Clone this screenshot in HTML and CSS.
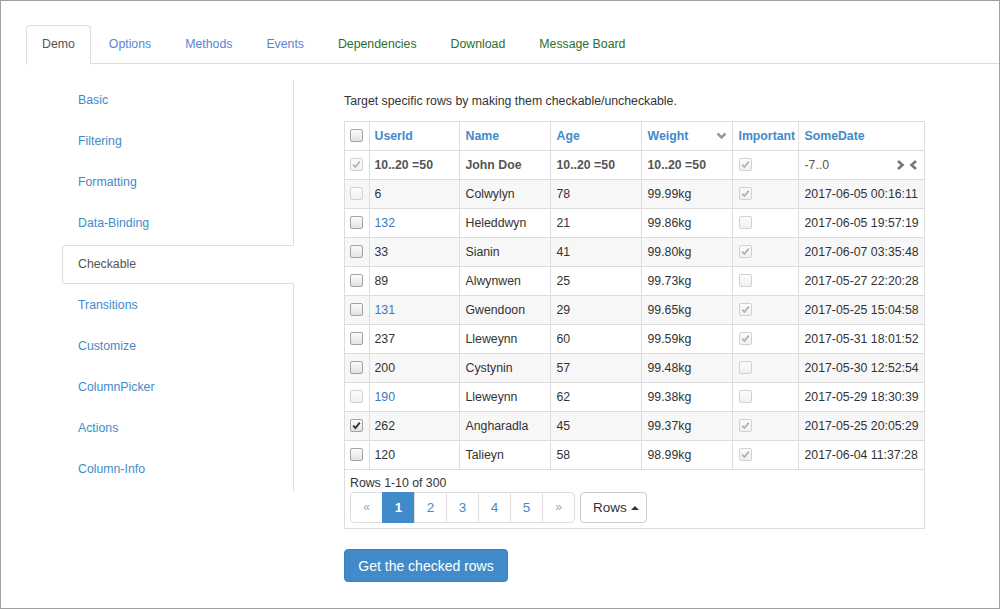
FILE: index.html
```html
<!DOCTYPE html>
<html>
<head>
<meta charset="utf-8">
<title>Checkable</title>
<link rel="stylesheet" href="styles.css">
</head>
<body>
<div class="page">
  <ul class="tabs">
    <li class="tab active"><a>Demo</a></li>
    <li class="tab"><a class="c-blue">Options</a></li>
    <li class="tab"><a class="c-blue">Methods</a></li>
    <li class="tab"><a class="c-blue">Events</a></li>
    <li class="tab"><a class="c-green">Dependencies</a></li>
    <li class="tab"><a class="c-green">Download</a></li>
    <li class="tab"><a class="c-green">Message Board</a></li>
  </ul>
  <div class="layout">
    <ul class="side">
      <li><a>Basic</a></li>
      <li><a>Filtering</a></li>
      <li><a>Formatting</a></li>
      <li><a>Data-Binding</a></li>
      <li class="active"><a>Checkable</a></li>
      <li><a>Transitions</a></li>
      <li><a>Customize</a></li>
      <li><a>ColumnPicker</a></li>
      <li><a>Actions</a></li>
      <li><a>Column-Info</a></li>
    </ul>
    <main class="main">
      <p class="intro">Target specific rows by making them checkable/uncheckable.</p>
      <div class="grid">
        <table>
          <colgroup>
            <col class="w-cb"><col class="w-uid"><col class="w-91"><col class="w-91"><col class="w-91"><col class="w-imp"><col class="w-date">
          </colgroup>
          <thead>
            <tr class="head">
              <th class="cbcell"><span class="cb"></span></th>
              <th class="first">UserId</th>
              <th>Name</th>
              <th>Age</th>
              <th><div class="flexcell"><span>Weight</span><svg class="chev-down" width="11" height="8" viewBox="0 0 11 8"><polyline points="1.5,1.5 5.5,5.5 9.5,1.5" fill="none" stroke="#999" stroke-width="2.6"/></svg></div></th>
              <th>Important</th>
              <th>SomeDate</th>
            </tr>
            <tr class="filter">
              <td class="cbcell"><span class="cb dis chk"><svg viewBox="0 0 13 13"><polyline points="3.2,6.6 5.4,9 9.8,3.6" fill="none" stroke-width="1.7"/></svg></span></td>
              <td class="first">10..20 =50</td>
              <td>John Doe</td>
              <td>10..20 =50</td>
              <td>10..20 =50</td>
              <td><span class="cb dis chk"><svg viewBox="0 0 13 13"><polyline points="3.2,6.6 5.4,9 9.8,3.6" fill="none" stroke-width="1.7"/></svg></span></td>
              <td class="normal"><div class="flexcell"><span>-7..0</span><span class="dicons"><svg width="9" height="10" viewBox="0 0 9 10"><polyline points="2,1 6.5,5 2,9" fill="none" stroke="#777" stroke-width="2.6"/></svg><svg width="9" height="10" viewBox="0 0 9 10"><polyline points="7,1 2.5,5 7,9" fill="none" stroke="#777" stroke-width="2.6"/></svg></span></div></td>
            </tr>
          </thead>
          <tbody>
            <tr><td class="cbcell"><span class="cb dis"></span></td><td class="first">6</td><td>Colwylyn</td><td>78</td><td>99.99kg</td><td><span class="cb dis chk"><svg viewBox="0 0 13 13"><polyline points="3.2,6.6 5.4,9 9.8,3.6" fill="none" stroke-width="1.7"/></svg></span></td><td>2017-06-05 00:16:11</td></tr>
            <tr><td class="cbcell"><span class="cb"></span></td><td class="first link">132</td><td>Heleddwyn</td><td>21</td><td>99.86kg</td><td><span class="cb dis"></span></td><td>2017-06-05 19:57:19</td></tr>
            <tr><td class="cbcell"><span class="cb"></span></td><td class="first">33</td><td>Sianin</td><td>41</td><td>99.80kg</td><td><span class="cb dis chk"><svg viewBox="0 0 13 13"><polyline points="3.2,6.6 5.4,9 9.8,3.6" fill="none" stroke-width="1.7"/></svg></span></td><td>2017-06-07 03:35:48</td></tr>
            <tr><td class="cbcell"><span class="cb"></span></td><td class="first">89</td><td>Alwynwen</td><td>25</td><td>99.73kg</td><td><span class="cb dis"></span></td><td>2017-05-27 22:20:28</td></tr>
            <tr><td class="cbcell"><span class="cb"></span></td><td class="first link">131</td><td>Gwendoon</td><td>29</td><td>99.65kg</td><td><span class="cb dis chk"><svg viewBox="0 0 13 13"><polyline points="3.2,6.6 5.4,9 9.8,3.6" fill="none" stroke-width="1.7"/></svg></span></td><td>2017-05-25 15:04:58</td></tr>
            <tr><td class="cbcell"><span class="cb"></span></td><td class="first">237</td><td>Lleweynn</td><td>60</td><td>99.59kg</td><td><span class="cb dis chk"><svg viewBox="0 0 13 13"><polyline points="3.2,6.6 5.4,9 9.8,3.6" fill="none" stroke-width="1.7"/></svg></span></td><td>2017-05-31 18:01:52</td></tr>
            <tr><td class="cbcell"><span class="cb"></span></td><td class="first">200</td><td>Cystynin</td><td>57</td><td>99.48kg</td><td><span class="cb dis"></span></td><td>2017-05-30 12:52:54</td></tr>
            <tr><td class="cbcell"><span class="cb dis"></span></td><td class="first link">190</td><td>Lleweynn</td><td>62</td><td>99.38kg</td><td><span class="cb dis"></span></td><td>2017-05-29 18:30:39</td></tr>
            <tr><td class="cbcell"><span class="cb chk"><svg viewBox="0 0 13 13"><polyline points="3.2,6.6 5.4,9 9.8,3.6" fill="none" stroke-width="1.9"/></svg></span></td><td class="first">262</td><td>Angharadla</td><td>45</td><td>99.37kg</td><td><span class="cb dis chk"><svg viewBox="0 0 13 13"><polyline points="3.2,6.6 5.4,9 9.8,3.6" fill="none" stroke-width="1.7"/></svg></span></td><td>2017-05-25 20:05:29</td></tr>
            <tr><td class="cbcell"><span class="cb"></span></td><td class="first">120</td><td>Talieyn</td><td>58</td><td>98.99kg</td><td><span class="cb dis chk"><svg viewBox="0 0 13 13"><polyline points="3.2,6.6 5.4,9 9.8,3.6" fill="none" stroke-width="1.7"/></svg></span></td><td>2017-06-04 11:37:28</td></tr>
          </tbody>
        </table>
        <div class="grid-footer">
          <div class="info">Rows 1-10 of 300</div>
          <div class="pager-row">
            <ul class="pagination">
              <li><a class="arrow">&laquo;</a></li>
              <li class="active"><a>1</a></li>
              <li><a>2</a></li>
              <li><a>3</a></li>
              <li><a>4</a></li>
              <li><a>5</a></li>
              <li><a class="arrow">&raquo;</a></li>
            </ul>
            <button class="rows-btn">Rows <span class="caret-up"></span></button>
          </div>
        </div>
      </div>
      <button class="btn-primary">Get the checked rows</button>
    </main>
  </div>
</div>
</body>
</html>
```

FILE: styles.css
```css
html, body {
  margin: 0;
  padding: 0;
  background: #fff;
}
body {
  font-family: "Liberation Sans", Arial, sans-serif;
  font-size: 12.3px;
  color: #333;
}
.page {
  width: 1000px;
  height: 609px;
  box-sizing: border-box;
  border: 1px solid #a0a0a0;
  padding: 24px 0 0 25px;
  overflow: hidden;
}

/* top tabs */
.tabs {
  list-style: none;
  margin: 0;
  padding: 0;
  display: flex;
  height: 38px;
  border-bottom: 1px solid #ddd;
}
.tab {
  margin-right: 2px;
  margin-bottom: -1px;
}
.tab a {
  display: block;
  height: 37px;
  line-height: 37px;
  padding: 0 15px;
  border: 1px solid transparent;
  border-bottom: 1px solid transparent;
  border-radius: 4px 4px 0 0;
}
.tab.active a {
  border-color: #ddd #ddd transparent;
  background: #fff;
  color: #555;
  height: 38px;
}
.c-blue { color: #5a84d6; }
.c-green { color: #2d6e2f; }

/* layout */
.layout {
  display: flex;
  margin: 16px 0 0 36px;
}
.side {
  list-style: none;
  margin: 0;
  padding: 1px 0 2px;
  width: 232px;
  box-sizing: border-box;
  border-right: 1px solid #ddd;
  align-self: flex-start;
}
.side li + li {
  margin-top: 2px;
}
.side a {
  display: block;
  height: 37px;
  line-height: 37px;
  padding: 0 15px;
  border: 1px solid transparent;
  border-radius: 4px 0 0 4px;
  margin-right: -1px;
  color: #428bca;
}
.side li.active a {
  border-color: #ddd transparent #ddd #ddd;
  background: #fff;
  color: #555;
}

.main {
  margin-left: 50px;
  width: 581px;
}
.intro {
  margin: 12px 0 11px;
  line-height: 18px;
}

/* grid */
.grid {
  width: 581px;
  box-sizing: border-box;
  border: 1px solid #ddd;
}
table {
  width: 100%;
  border-collapse: collapse;
  table-layout: fixed;
  border-style: hidden;
}
.w-cb { width: 24px; }
.w-uid { width: 90px; }
.w-91 { width: 91px; }
.w-imp { width: 66px; }
.w-date { width: 126px; }
th, td {
  border: 1px solid #ddd;
  padding: 0 5px 0 6px;
  height: 28px;
  text-align: left;
  vertical-align: middle;
  white-space: nowrap;
  overflow: hidden;
}
th.first, td.first {
  padding-left: 5px;
}
th {
  color: #428bca;
  font-weight: bold;
}
.filter td {
  font-weight: bold;
  color: #555;
}
.filter td.normal {
  font-weight: normal;
}
tbody tr:nth-child(odd) td {
  background: #f7f7f7;
}
td.link {
  color: #3a78bf;
}
.cbcell {
  text-align: center;
  padding: 0;
}
.flexcell {
  display: flex;
  align-items: center;
  justify-content: space-between;
}
.chev-down {
  display: block;
}
.dicons {
  display: flex;
  gap: 4px;
  margin-right: 1px;
}
.dicons svg {
  display: block;
}

/* checkboxes */
.cb {
  display: inline-block;
  width: 11px;
  height: 11px;
  border: 1px solid #a3a3a3;
  border-radius: 2px;
  background: linear-gradient(#fbfbfb, #e2e2e2);
  vertical-align: -2px;
  position: relative;
}
.cb.dis {
  border-color: #d2d2d2;
  background: linear-gradient(#fcfcfc, #f0f0f0);
}
.cb svg {
  position: absolute;
  left: -1px;
  top: -1px;
  width: 13px;
  height: 13px;
  stroke: #333;
}
.cb.dis svg {
  stroke: #b0b0b0;
}

/* footer */
.grid-footer {
  border-top: 1px solid #ddd;
  padding: 4px 5px 5px;
}
.info {
  line-height: 18px;
}
.pager-row {
  display: flex;
  align-items: flex-start;
}
.pagination {
  list-style: none;
  margin: 0;
  padding: 0;
  display: flex;
}
.pagination li a {
  display: block;
  width: 31px;
  height: 29px;
  line-height: 29px;
  text-align: center;
  border: 1px solid #ddd;
  margin-left: -1px;
  color: #428bca;
  font-size: 13.5px;
  background: #fff;
}
.pagination li:first-child a {
  margin-left: 0;
  border-radius: 4px 0 0 4px;
}
.pagination li:last-child a {
  border-radius: 0 4px 4px 0;
}
.pagination li.active a {
  background: #428bca;
  border-color: #428bca;
  color: #fff;
  font-weight: bold;
}
.pagination a.arrow {
  color: #97a9c9;
  font-size: 12px;
}
.rows-btn {
  margin-left: 5px;
  width: 67px;
  height: 31px;
  padding: 0 0 0 12px;
  text-align: left;
  border: 1px solid #ccc;
  border-radius: 4px;
  background: #fff;
  color: #333;
  font-family: "Liberation Sans", Arial, sans-serif;
  font-size: 13.5px;
}
.caret-up {
  display: inline-block;
  width: 0;
  height: 0;
  border-left: 4px solid transparent;
  border-right: 4px solid transparent;
  border-bottom: 4px solid #333;
  vertical-align: 2px;
}

.btn-primary {
  margin-top: 20px;
  width: 164px;
  height: 33px;
  padding: 0;
  border: 1px solid #3b7fc0;
  border-radius: 4px;
  background: #428bca;
  color: #fff;
  font-family: "Liberation Sans", Arial, sans-serif;
  font-size: 14px;
}
```
